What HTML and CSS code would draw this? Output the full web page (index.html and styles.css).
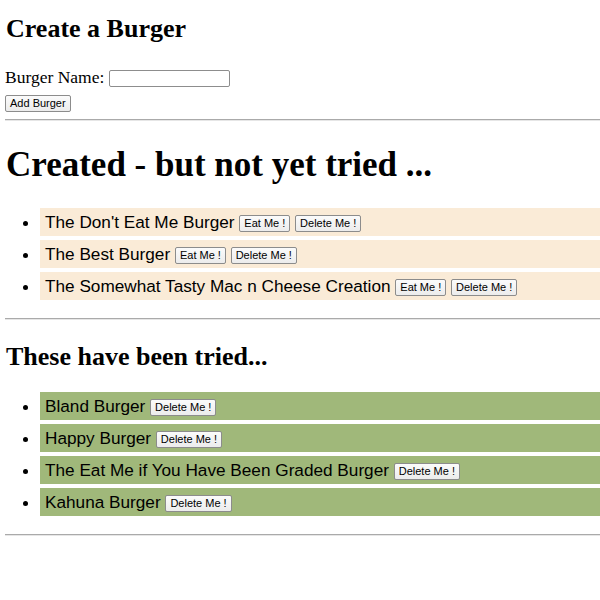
FILE: index.html
```html
<!DOCTYPE html>
<html>
<head>
<meta charset="utf-8">
<link rel="stylesheet" href="styles.css">
</head>
<body>
<h2 class="title">Create a Burger</h2>
<form class="form">
  <div class="field"><label for="burger">Burger Name:</label> <input id="burger" class="input" type="text"></div>
  <button class="btn add" type="button">Add Burger</button>
</form>
<hr class="rule">
<h1 class="big">Created - but not yet tried ...</h1>
<ul class="list">
  <li class="item fresh">The Don't Eat Me Burger <button class="btn" type="button">Eat Me !</button> <button class="btn" type="button">Delete Me !</button></li>
  <li class="item fresh">The Best Burger <button class="btn" type="button">Eat Me !</button> <button class="btn" type="button">Delete Me !</button></li>
  <li class="item fresh">The Somewhat Tasty Mac n Cheese Creation <button class="btn" type="button">Eat Me !</button> <button class="btn" type="button">Delete Me !</button></li>
</ul>
<hr class="rule">
<h2 class="title second">These have been tried...</h2>
<ul class="list">
  <li class="item eaten">Bland Burger <button class="btn" type="button">Delete Me !</button></li>
  <li class="item eaten">Happy Burger <button class="btn" type="button">Delete Me !</button></li>
  <li class="item eaten">The Eat Me if You Have Been Graded Burger <button class="btn" type="button">Delete Me !</button></li>
  <li class="item eaten">Kahuna Burger <button class="btn" type="button">Delete Me !</button></li>
</ul>
<hr class="rule">
</body>
</html>
```
FILE: styles.css
```css
body {
  margin: 0 0 0 5px;
  font-family: "Liberation Serif", "Times New Roman", serif;
  font-size: 17.5px;
  color: #000;
  background: #fff;
}
.title {
  font-size: 26px;
  font-weight: bold;
  margin: 14px 0 23px 1px;
}
.second {
  margin-top: 22px;
  margin-bottom: 20px;
}
.form { margin: 0; }
.field { line-height: 20px; }
.input {
  width: 117px;
  height: 13px;
  padding: 1px;
  border: 1px solid #8d8d8d;
  border-radius: 2px;
  vertical-align: 1px;
  font-size: 12px;
}
.btn {
  font-family: "Liberation Sans", Arial, sans-serif;
  font-size: 11px;
  line-height: 13px;
  padding: 1px 4px;
  margin: 0;
  border: 1px solid #8c8c8c;
  border-radius: 2px;
  background: linear-gradient(#fbfbfb, #ececec);
  color: #000;
  vertical-align: 1px;
}
.add {
  margin-top: 8px;
  padding: 1px 4px;
}
.rule {
  margin: 6px 0 0 0;
  border: 0;
  border-top: 1px solid #aaa;
  border-bottom: 1px solid #e6e6e6;
  height: 0;
}
.big {
  font-size: 35px;
  font-weight: bold;
  margin: 24px 0 23px 1px;
}
.list {
  margin: 0;
  padding: 0 0 0 35px;
}
.item {
  font-family: "Liberation Sans", Arial, sans-serif;
  font-size: 17.2px;
  line-height: 20px;
  padding: 4px 5px;
  margin-bottom: 4px;
}
.fresh { background: #faebd7; }
.eaten { background: #a0b87a; }
.list + .rule { margin-top: 18px; }
```
